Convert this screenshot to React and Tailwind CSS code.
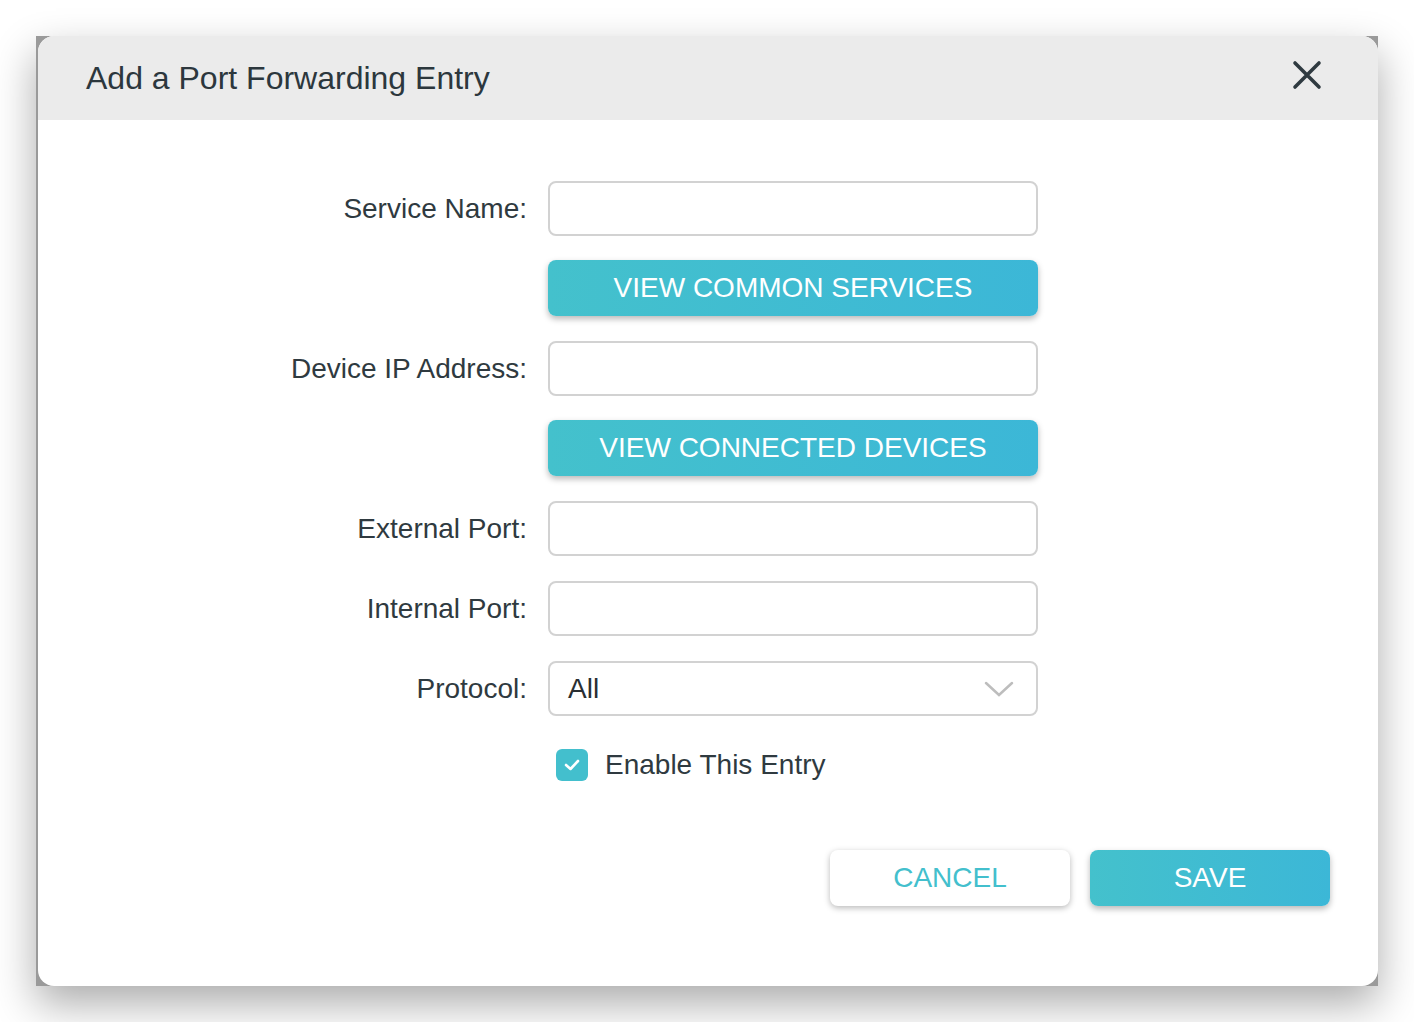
import React from "react";

const font = { fontFamily: '"Liberation Sans", Arial, sans-serif' };

function TextField() {
  return (
    <input
      type="text"
      className="h-[55px] w-[490px] rounded-[8px] border-2 border-[#d2d2d2] bg-white px-4 text-[28px] outline-none"
    />
  );
}

function Label({ children }) {
  return (
    <div className="flex h-[55px] items-center justify-end text-[28px] text-[#2f3a40]">
      {children}
    </div>
  );
}

function TealButton({ children, className = "" }) {
  return (
    <button
      className={
        "flex h-[56px] items-center justify-center rounded-[8px] bg-gradient-to-r from-[#44c1cc] to-[#3cb7d7] text-[28px] text-white shadow-[0_3px_6px_rgba(0,0,0,0.28)] " +
        className
      }
    >
      {children}
    </button>
  );
}

export default function App() {
  return (
    <div className="flex min-h-[1022px] bg-white px-[36px] pt-[36px]" style={font}>
      <div className="flex h-[950px] w-[1342px] bg-[#9a9a9a] pl-[2px] shadow-[0_18px_40px_rgba(0,0,0,0.33)]">
        <div className="flex flex-1 flex-col overflow-hidden rounded-[16px] bg-white">
          {/* header */}
          <div className="flex h-[84px] shrink-0 items-center justify-between bg-[#ebebeb] pl-[48px] pr-[56px]">
            <h1 className="text-[32px] text-[#2c373d]">Add a Port Forwarding Entry</h1>
            <svg width="30" height="30" viewBox="0 0 30 30" className="mt-[-6px]">
              <path d="M3 3 L27 27 M27 3 L3 27" stroke="#2f3a40" strokeWidth="3.6" strokeLinecap="round" />
            </svg>
          </div>

          {/* form */}
          <div className="grid grid-cols-[489px_490px] gap-x-[21px] gap-y-[25px] pt-[61px]">
            <Label>Service Name:</Label>
            <TextField />

            <div />
            <TealButton className="mt-[-1px]">VIEW COMMON SERVICES</TealButton>

            <Label>Device IP Address:</Label>
            <TextField />

            <div />
            <TealButton className="mt-[-1px]">VIEW CONNECTED DEVICES</TealButton>

            <Label>External Port:</Label>
            <TextField />

            <Label>Internal Port:</Label>
            <TextField />

            <Label>Protocol:</Label>
            <div className="flex h-[55px] items-center justify-between rounded-[8px] border-2 border-[#d2d2d2] pl-[18px] pr-[22px] text-[28px] text-[#2a2f33]">
              <span>All</span>
              <svg width="30" height="18" viewBox="0 0 30 18">
                <path d="M2 3 L15 15 L28 3" fill="none" stroke="#bdbdbd" strokeWidth="2.5" strokeLinecap="round" />
              </svg>
            </div>

            <div />
            <div className="mt-[3px] flex items-center gap-[17px] pl-[8px]">
              <span className="flex h-[32px] w-[32px] items-center justify-center rounded-[6px] bg-[#43bfcd]">
                <svg width="18" height="14" viewBox="0 0 18 14">
                  <path d="M3 7 L7.5 11 L15 3" fill="none" stroke="white" strokeWidth="2.6" strokeLinecap="round" strokeLinejoin="round" />
                </svg>
              </span>
              <span className="text-[28px] text-[#2f3a40]">Enable This Entry</span>
            </div>
          </div>

          {/* footer */}
          <div className="mt-auto flex justify-end gap-[20px] pb-[80px] pr-[48px]">
            <button className="flex h-[56px] w-[240px] items-center justify-center rounded-[8px] bg-white text-[28px] text-[#43bfcd] shadow-[0_2px_6px_rgba(0,0,0,0.28)]">
              CANCEL
            </button>
            <TealButton className="w-[240px]">SAVE</TealButton>
          </div>
        </div>
      </div>
    </div>
  );
}
